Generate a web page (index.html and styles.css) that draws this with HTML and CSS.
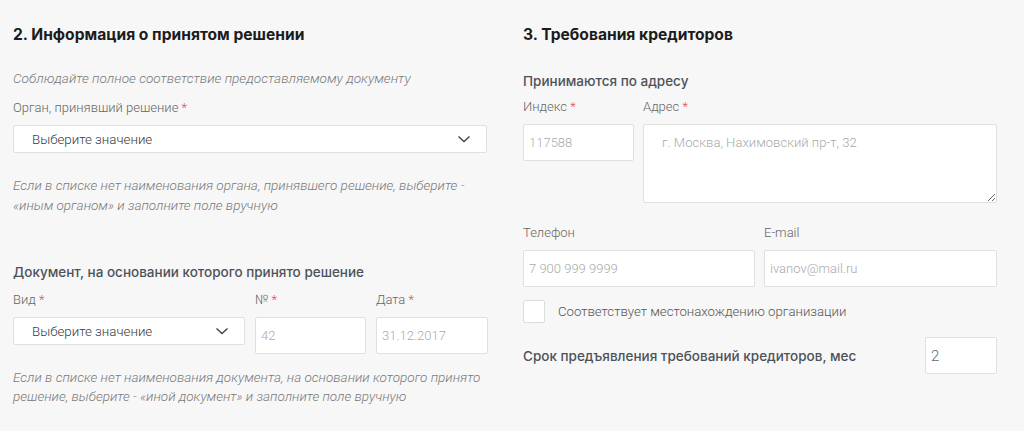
FILE: index.html
```html
<!DOCTYPE html>
<html lang="ru">
<head>
<meta charset="utf-8">
<link rel="stylesheet" href="styles.css">
</head>
<body>
<div class="page">
  <section class="col">
    <h2 class="title">2. Информация о принятом решении</h2>
    <p class="hint hint-top">Соблюдайте полное соответствие предоставляемому документу</p>
    <div class="label label-organ">Орган, принявший решение <span class="req">*</span></div>
    <div class="select select-wide">
      <span>Выберите значение</span>
      <svg class="chev" width="14" height="8" viewBox="0 0 14 8"><path d="M1.5 1.5 L7 6.5 L12.5 1.5" fill="none" stroke="#444" stroke-width="1.4"/></svg>
    </div>
    <p class="hint hint-organ">Если в списке нет наименования органа, принявшего решение, выберите -<br>«иным органом» и заполните поле вручную</p>

    <h3 class="subtitle sub-doc">Документ, на основании которого принято решение</h3>
    <div class="doc-grid">
      <div class="field">
        <div class="label">Вид <span class="req">*</span></div>
        <div class="select select-short">
          <span>Выберите значение</span>
          <svg class="chev" width="14" height="8" viewBox="0 0 14 8"><path d="M1.5 1.5 L7 6.5 L12.5 1.5" fill="none" stroke="#444" stroke-width="1.4"/></svg>
        </div>
      </div>
      <div class="field">
        <div class="label">№ <span class="req">*</span></div>
        <input class="input" placeholder="42">
      </div>
      <div class="field">
        <div class="label">Дата <span class="req">*</span></div>
        <input class="input" placeholder="31.12.2017">
      </div>
    </div>
    <p class="hint hint-doc">Если в списке нет наименования документа, на основании которого принято<br>решение, выберите - «иной документ» и заполните поле вручную</p>
  </section>

  <section class="col">
    <h2 class="title">3. Требования кредиторов</h2>
    <h3 class="subtitle sub-addr">Принимаются по адресу</h3>
    <div class="addr-grid">
      <div class="field">
        <div class="label">Индекс <span class="req">*</span></div>
        <input class="input" placeholder="117588">
      </div>
      <div class="field">
        <div class="label">Адрес <span class="req">*</span></div>
        <textarea class="textarea" placeholder="г. Москва, Нахимовский пр-т, 32"></textarea>
      </div>
    </div>
    <div class="contact-grid">
      <div class="field">
        <div class="label">Телефон</div>
        <input class="input" placeholder="7 900 999 9999">
      </div>
      <div class="field">
        <div class="label">E-mail</div>
        <input class="input" placeholder="ivanov@mail.ru">
      </div>
    </div>
    <label class="check-row">
      <span class="checkbox"></span>
      <span class="check-text">Соответствует местонахождению организации</span>
    </label>
    <div class="term-row">
      <span class="term-text">Срок предъявления требований кредиторов, мес</span>
      <input class="input input-term" value="2">
    </div>
  </section>
</div>
</body>
</html>
```

FILE: styles.css
```css
* { box-sizing: border-box; }
html, body { margin: 0; padding: 0; }
body {
  background: #f7f7f7;
  font-family: Roboto, "Noto Sans", "Liberation Sans", sans-serif;
  color: #333;
  width: 1024px;
  height: 431px;
  overflow: hidden;
}
.page {
  display: grid;
  grid-template-columns: 474px 474px;
  column-gap: 36px;
  padding: 25px 0 0 13px;
}
.col { display: flex; flex-direction: column; }
.title {
  margin: 0;
  font-family: Inter, Roboto, sans-serif;
  font-size: 15.6px;
  line-height: 20px;
  font-weight: 700;
  color: #1c1c1c;
}
.subtitle {
  margin: 0;
  font-family: Inter, Roboto, sans-serif;
  font-size: 13.5px;
  line-height: 20px;
  font-weight: 500;
  color: #4d525a;
}
.hint {
  margin: 0;
  font-size: 13.5px;
  line-height: 20px;
  font-style: italic;
  color: #7a7a7a;
  font-weight: 300;
}
.label {
  font-size: 13px;
  line-height: 20px;
  color: #666;
  font-weight: 300;
}
.req { color: #e04b5a; }
.hint-top { margin-top: 23px; font-size: 13.6px; }
.label-organ { margin-top: 10px; }
.select {
  display: flex;
  align-items: center;
  justify-content: space-between;
  height: 28px;
  background: #fff;
  border: 1px solid #e0e0e0;
  border-radius: 2px;
  padding: 0 15px 0 18px;
  font-size: 13.3px;
  color: #3a3a3a;
  font-weight: 300;
}
.select-wide { margin-top: 7px; }
.hint-organ { margin-top: 22px; }
.sub-doc { margin-top: 47px; }
.doc-grid {
  display: grid;
  grid-template-columns: 232px 111px 112px;
  column-gap: 10px;
  margin-top: 8px;
}
.field { display: flex; flex-direction: column; }
.field .label { margin-bottom: 7px; }
.input {
  height: 37px;
  width: 100%;
  background: #fff;
  border: 1px solid #e0e0e0;
  border-radius: 2px;
  padding: 0 5px;
  font-family: inherit;
  font-size: 13px;
  font-weight: 300;
  color: #555;
  outline: none;
}
.input::placeholder { color: #aaa; }
.hint-doc { margin-top: 14px; line-height: 19px; }

.sub-addr { margin-top: 26px; }
.addr-grid {
  display: grid;
  grid-template-columns: 111px 354px;
  column-gap: 9px;
  margin-top: 6px;
  align-items: start;
}
.textarea {
  height: 79px;
  width: 100%;
  background: #fff;
  border: 1px solid #e0e0e0;
  border-radius: 2px;
  padding: 10px 18px;
  font-family: inherit;
  font-size: 13.1px;
  font-weight: 300;
  resize: vertical;
  outline: none;
}
.textarea::placeholder { color: #aaa; }
.contact-grid {
  display: grid;
  grid-template-columns: 232px 233px;
  column-gap: 9px;
  margin-top: 20px;
}
.check-row {
  display: flex;
  align-items: center;
  margin-top: 13px;
  height: 23px;
}
.checkbox {
  width: 22px;
  height: 23px;
  background: #fff;
  border: 1px solid #dcdcdc;
  border-radius: 2px;
}
.check-text {
  margin-left: 13px;
  font-size: 13.2px;
  color: #555;
  font-weight: 300;
}
.term-row {
  display: flex;
  align-items: center;
  justify-content: space-between;
  margin-top: 14px;
  width: 474px;
}
.term-text {
  font-family: Inter, Roboto, sans-serif;
  font-size: 13.5px;
  font-weight: 500;
  color: #4d525a;
}
.input-term { width: 72px; font-size: 15px; color: #666; }
```
